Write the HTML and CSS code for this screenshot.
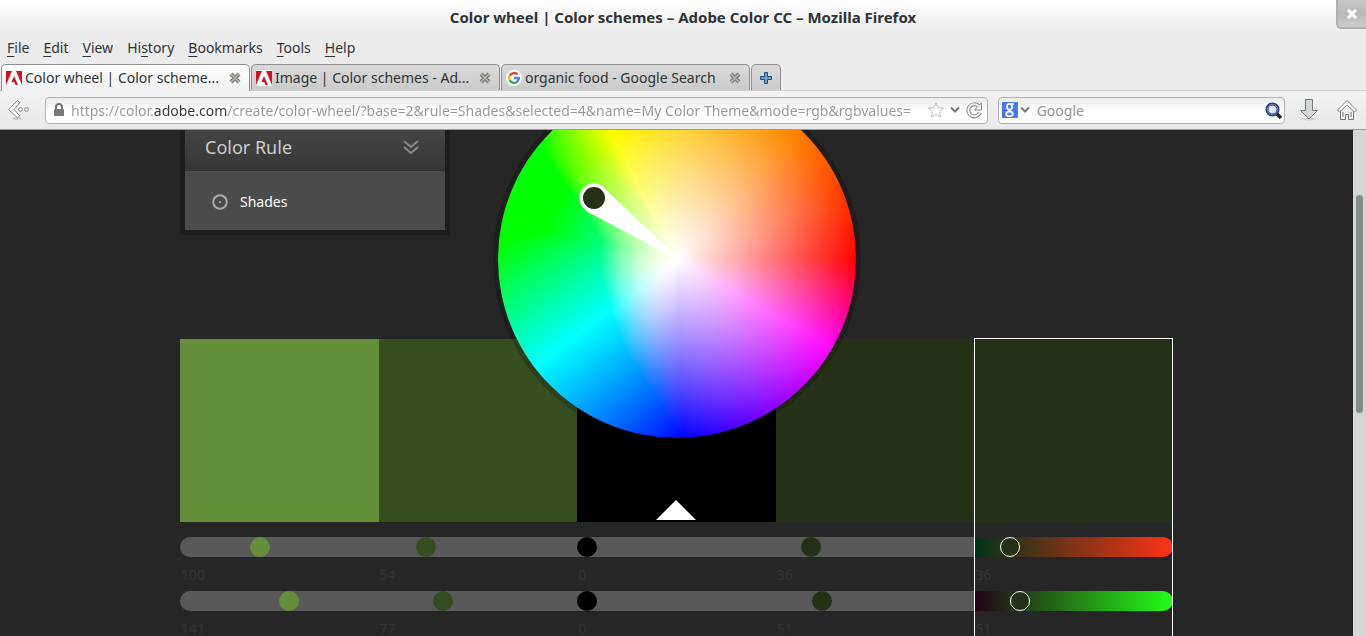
FILE: index.html
```
<!DOCTYPE html>
<html lang="en">
<head>
<meta charset="utf-8">
<title>Color wheel | Color schemes – Adobe Color CC</title>
<link rel="stylesheet" href="styles.css">
</head>
<body>
<header class="chrome">
  <div class="titlebar">
    <h1 class="title">Color wheel | Color schemes – Adobe Color CC – Mozilla Firefox</h1>
    <button class="window-close" aria-label="Close window"><svg width="10" height="10" viewBox="0 0 10 10"><path d="M1 1l8 8M9 1l-8 8" stroke="#fff" stroke-width="3"/></svg></button>
  </div>
  <nav class="menubar">
    <button><u>F</u>ile</button><button><u>E</u>dit</button><button><u>V</u>iew</button><button>Hi<u>s</u>tory</button><button><u>B</u>ookmarks</button><button><u>T</u>ools</button><button><u>H</u>elp</button>
  </nav>
  <div class="tabs">
    <div class="tab active">
      <svg class="fav" viewBox="0 0 16 16"><path fill="#fff" d="M0 0h16v16H0z"/><path fill="#d7101c" d="M0 1h6L0 15zM10 1h6v14zM8 6l4 9H9.500l-1.200-3H5.500z"/></svg>
      <button class="tab-label">Color wheel | Color scheme...</button>
      <button class="tab-close" aria-label="Close tab"><svg width="12" height="12" viewBox="0 0 12 12"><path d="M2 2l8 8M10 2l-8 8" stroke="#7c7c76" stroke-width="4"/><path d="M2 2l8 8M10 2l-8 8" stroke="#b9b9b3" stroke-width="1.500"/></svg></button>
    </div>
    <div class="tab">
      <svg class="fav" viewBox="0 0 16 16"><path fill="#fff" d="M0 0h16v16H0z"/><path fill="#d7101c" d="M0 1h6L0 15zM10 1h6v14zM8 6l4 9H9.500l-1.200-3H5.500z"/></svg>
      <button class="tab-label">Image | Color schemes - Ad...</button>
      <button class="tab-close" aria-label="Close tab"><svg width="12" height="12" viewBox="0 0 12 12"><path d="M2 2l8 8M10 2l-8 8" stroke="#7c7c76" stroke-width="4"/><path d="M2 2l8 8M10 2l-8 8" stroke="#b9b9b3" stroke-width="1.500"/></svg></button>
    </div>
    <div class="tab">
      <svg class="fav" viewBox="0 0 16 16"><circle cx="8" cy="8" r="8" fill="#fff"/><g fill="none" stroke-width="2.400"><path stroke="#ea4335" d="M3.700 5.800A4.800 4.800 0 0 1 11.500 4.500"/><path stroke="#fbbc05" d="M3.700 5.800a4.800 4.800 0 0 0 0 4.400"/><path stroke="#34a853" d="M3.700 10.200a4.800 4.800 0 0 0 7.600 1.400"/><path stroke="#4285f4" d="M8 8h4.800a4.800 4.800 0 0 1-1.500 3.600"/></g></svg>
      <button class="tab-label">organic food - Google Search</button>
      <button class="tab-close" aria-label="Close tab"><svg width="12" height="12" viewBox="0 0 12 12"><path d="M2 2l8 8M10 2l-8 8" stroke="#7c7c76" stroke-width="4"/><path d="M2 2l8 8M10 2l-8 8" stroke="#b9b9b3" stroke-width="1.500"/></svg></button>
    </div>
    <button class="tab new-tab" aria-label="New tab"><svg width="12" height="12" viewBox="0 0 12 12"><path d="M4.500.5h3v4h4v3h-4v4h-3v-4h-4v-3h4z" fill="#709bce" stroke="#204a87"/></svg></button>
  </div>
  <div class="toolbar">
    <button class="tool back" aria-label="Back"><svg width="24" height="22" viewBox="0 0 24 22"><ellipse cx="9" cy="19.500" rx="5" ry="1.300" fill="#ccc"/><path d="M9.500 1.500L.700 10.500l8.800 8.500 2.200-2.200-5.700-6.300 5.700-6.800z" fill="#f8f8f8" stroke="#888a85"/><g fill="#f4f4f4" stroke="#888a85"><circle cx="12.500" cy="10.500" r="1.900"/><circle cx="18.500" cy="10.500" r="1.900"/></g></svg></button>
    <div class="field address">
      <svg width="12" height="14" viewBox="0 0 12 14"><path d="M3 6V4a3 3 0 0 1 6 0v2" fill="none" stroke="#777" stroke-width="2"/><rect x="1" y="6" width="10" height="7" rx="1" fill="#777"/></svg>
      <input class="url" aria-label="Address" value="https://color.adobe.com/create/color-wheel/?base=2&amp;rule=Shades&amp;selected=4&amp;name=My Color Theme&amp;mode=rgb&amp;rgbvalues=">
      <button class="tool" aria-label="Bookmark"><svg width="16" height="16" viewBox="0 0 16 16"><path d="M8 1l2.200 4.600 5.200.6-3.800 3.600 1 5.200L8 12.400 3.400 15l1-5.200L.600 6.200l5.200-.6z" fill="#fff" stroke="#bbb"/></svg></button>
      <button class="tool" aria-label="History"><svg width="10" height="8" viewBox="0 0 10 8"><path d="M1 1.500l4 4 4-4" fill="none" stroke="#777" stroke-width="2"/></svg></button>
      <button class="tool" aria-label="Reload"><svg width="17" height="17" viewBox="0 0 17 17"><path d="M12.500 4A6 6 0 1 0 14 10.500" fill="none" stroke="#888" stroke-width="4"/><path d="M15.500 1v7H8.500l2.200-2.300z" fill="#f6f6f6" stroke="#888"/><path d="M12.500 4A6 6 0 1 0 14 10.200" fill="none" stroke="#f6f6f6" stroke-width="2"/></svg></button>
    </div>
    <div class="field search">
      <svg width="16" height="16" viewBox="0 0 16 16"><rect width="16" height="16" rx="1" fill="#4479f4"/><g fill="none" stroke="#fff" stroke-width="1.700"><ellipse cx="7.500" cy="4.800" rx="2.600" ry="2.900"/><path d="M8 7.500c-1.500 1 .200 1.500 1.500 2.300"/><ellipse cx="7.500" cy="12" rx="3.300" ry="2.300"/><path d="M8 2h4"/></g></svg>
      <button class="tool engine" aria-label="Search engine"><svg width="10" height="8" viewBox="0 0 10 8"><path d="M1 1.500l4 4 4-4" fill="none" stroke="#777" stroke-width="2"/></svg></button>
      <input class="query" aria-label="Search" placeholder="Google">
      <button class="tool" aria-label="Search"><svg width="17" height="17" viewBox="0 0 17 17"><path d="M11 11l5 5" stroke="#222" stroke-width="3.500"/><circle cx="7.500" cy="7.500" r="5.500" fill="#dce6f4" stroke="#263a82" stroke-width="3"/><circle cx="7.500" cy="7.500" r="5.200" fill="none" stroke="#6f86c8"/></svg></button>
    </div>
    <button class="tool download" aria-label="Downloads"><svg width="20" height="22" viewBox="0 0 20 22"><ellipse cx="10" cy="20" rx="7" ry="1.500" fill="#ccc"/><path d="M6.500.5h7v11h5L10 20l-8.500-8.500h5z" fill="#d2d7da" stroke="#73767a"/></svg></button>
    <button class="tool home" aria-label="Home"><svg width="22" height="22" viewBox="0 0 22 22"><path d="M4.500 12v8.500h5v-5h3v5h5V12L11 6z" fill="#eee" stroke="#73767a"/><path d="M7 13v5M15 13v5" stroke="#73767a"/><path d="M11 1.500L1.500 11l2 2L11 6l7.500 7 2-2z" fill="#fff" stroke="#888a85"/></svg></button>
  </div>
</header>
<div class="viewport">
  <main class="page">
    <section class="stage">
      <div class="rule-panel">
        <button class="rule-head">Color Rule<svg width="16" height="14" viewBox="0 0 16 14"><path d="M1 1l7 6 7-6M1 7l7 6 7-6" fill="none" stroke="#888" stroke-width="2"/></svg></button>
        <button class="rule-item"><svg width="16" height="16" viewBox="0 0 16 16"><circle cx="8" cy="8" r="6.800" fill="none" stroke="#aaa" stroke-width="2"/><circle cx="8" cy="8" r="1" fill="#bbb"/></svg>Shades</button>
      </div>
      <div class="wheel">
        <canvas id="wheel" width="358" height="358"></canvas>
        <svg class="marker" viewBox="0 0 358 358"><path d="M183 181L106 108 88 131z" fill="#fff"/><circle cx="96" cy="118" r="14.500" fill="#fff"/><circle cx="96" cy="118" r="11" fill="#253117"/></svg>
      </div>
    </section>
    <section class="theme">
      <div class="color c1"><button class="swatch" aria-label="Color 1"></button>
        <input type="range" max="255" value="100" id="r1"><label for="r1">100</label><input type="range" max="255" value="141" id="g1"><label for="g1">141</label></div>
      <div class="color c2"><button class="swatch" aria-label="Color 2"></button>
        <input type="range" max="255" value="54" id="r2"><label for="r2">54</label><input type="range" max="255" value="77" id="g2"><label for="g2">77</label></div>
      <div class="color c3"><button class="swatch" aria-label="Base color"><svg width="40" height="20" viewBox="0 0 40 20"><path d="M20 0l20 20H0z" fill="#fff"/></svg></button>
        <input type="range" max="255" value="0" id="r3"><label for="r3">0</label><input type="range" max="255" value="0" id="g3"><label for="g3">0</label></div>
      <div class="color c4"><button class="swatch" aria-label="Color 4"></button>
        <input type="range" max="255" value="36" id="r4"><label for="r4">36</label><input type="range" max="255" value="51" id="g4"><label for="g4">51</label></div>
      <div class="color c5 selected"><button class="swatch" aria-label="Color 5"></button>
        <input class="red" type="range" max="255" value="36" id="r5"><label for="r5">36</label><input class="green" type="range" max="255" value="51" id="g5"><label for="g5">51</label></div>
    </section>
  </main>
  <div class="scrollbar"><div class="thumb"></div></div>
</div>
<script src="wheel.js"></script>
</body>
</html>
```
FILE: styles.css
```
* { box-sizing: border-box; }
body { margin: 0; height: 100vh; display: flex; flex-direction: column; overflow: hidden; font: 14px/20px "Noto Sans", sans-serif; color: #2e3436; background: #262626; }
button { font: inherit; color: inherit; border: 0; background: none; padding: 0; text-align: left; }
svg { display: block; flex: none; }
.chrome { background: linear-gradient(#fff, #ececec 32px, #ececec); border-bottom: 1px solid #9c9c9c; flex: none; }
.titlebar { position: relative; height: 36px; }
.title { margin: 0; font-size: 15px; font-weight: 700; line-height: 34px; text-align: center; }
.window-close { position: absolute; right: 0; top: 0; width: 30px; height: 29px; display: grid; place-items: center; border: 2px solid #b0b0b0; border-width: 0 0 2px 2px; border-radius: 0 0 0 5px; background: linear-gradient(#c8c8c8, #b8b8b8 50%, #ccc); }
.menubar { display: flex; align-items: flex-start; gap: 14px; padding: 2px 7px; height: 28px; }
.menubar u { text-underline-offset: 3px; }
.tabs { display: flex; gap: 1px; padding-left: 1px; height: 27px; border-bottom: 1px solid #cfcfcf; }
.tab { width: 249px; display: flex; align-items: center; gap: 3px; padding: 0 8px 0 4px; border: 1px solid #8f8f8f; border-bottom: 0; border-radius: 5px 5px 0 0; background: linear-gradient(#d9d9d9, #cbcbcb); }
.tab.active { background: linear-gradient(#fff, #f0f0f0); margin-bottom: -1px; }
.fav { width: 16px; height: 16px; }
.tab-label { flex: 1; min-width: 0; white-space: nowrap; }
.new-tab { width: 30px; justify-content: center; padding: 0; }
.toolbar { display: flex; align-items: center; height: 38px; padding: 0 8px; background: linear-gradient(#f2f2f2, #e9e9e9); }
.tool { flex: none; }
.back { margin-right: 13px; }
.field { display: flex; align-items: center; height: 27px; border: 1px solid #b3b3b3; border-radius: 4px; background: linear-gradient(#ececec, #fff 14px); }
.address { flex: 945; gap: 6px; padding: 0 4px 0 7px; }
.search { flex: 285; margin-left: 10px; padding: 0 2px 0 3px; }
input { font: inherit; border: 0; min-width: 0; padding: 0; margin: 0; background: none; outline: 0; }
.url { flex: 1; padding-top: 1px; color: transparent; background: linear-gradient(90deg, #969896 83px, #2e3436 83px, #2e3436 157px, #969896 157px); background-clip: text; -webkit-background-clip: text; }
.engine { margin: 0 7px 0 2px; }
.query { flex: 1; padding-top: 1px; }
.query::placeholder { color: #969896; opacity: 1; }
.download { margin-left: 14px; }
.home { margin-left: 17px; }
.viewport { flex: 1; min-height: 0; display: flex; overflow: hidden; }
.page { flex: 1; min-width: 0; overflow: hidden; padding: 0 180px; }
.stage { position: relative; height: 209px; }
.rule-panel { width: 270px; height: 105px; display: flex; flex-direction: column; border: 5px solid #1d1d1d; border-top: 0; background: #4b4b4b; }
.rule-head { height: 41px; display: flex; align-items: center; justify-content: space-between; padding: 0 26px 6px 20px; font-size: 18px; color: #ccc; background: linear-gradient(#454545, #363636); border-bottom: 1px solid #303030; }
.rule-item { flex: 1; display: flex; align-items: center; gap: 12px; padding-left: 27px; padding-top: 3px; color: #fff; }
.wheel { position: absolute; z-index: 1; top: -50px; left: 50%; width: 358px; height: 358px; margin-left: -179px; border-radius: 50%; box-shadow: 0 0 0 5px rgba(0, 0, 0, .2); }
.wheel canvas { display: block; border-radius: 50%; }
.marker { position: absolute; inset: 0; }
.theme { display: grid; grid-template-columns: repeat(5, 1fr); }
.color { display: flex; flex-direction: column; position: relative; }
.c1 { --c: #658e3b; } .c2 { --c: #364d20; } .c3 { --c: #000; } .c4, .c5 { --c: #253117; }
.swatch { height: 183px; background: var(--c); margin-bottom: 15px; display: flex; justify-content: center; align-items: end; padding-bottom: 2px; }
.color input { appearance: none; width: 100%; height: 20px; background: #595959; }
.c1 input { border-radius: 10px 0 0 10px; }
.c5 input { border-radius: 0 10px 10px 0; }
.c5 .red { background: linear-gradient(90deg, #003317, #ff3317); }
.c5 .green { background: linear-gradient(90deg, #240017, #24ff17); }
.color input::-webkit-slider-thumb { appearance: none; width: 20px; height: 20px; border-radius: 50%; background: var(--c); }
.selected input::-webkit-slider-thumb { border: 1px solid #fff; }
.color label { height: 34px; padding: 8px 1px; color: #303537; }
.selected::after { content: ""; position: absolute; inset: -1px 0; border: 1px solid #fff; pointer-events: none; }
.scrollbar { width: 13px; background: #d6d6d6; padding: 65px 3px 0; }
.thumb { height: 218px; border-radius: 4px; background: #858a8a; }
```
FILE: wheel.js
```
const canvas = document.getElementById('wheel');
const ctx = canvas.getContext('2d');
const size = canvas.width;
const image = ctx.createImageData(size, size);

// Stops: [angle in degrees, value at the rim, radius where the rim value is reached, falloff exponent]
const channels = [
  [[0, 1, 1, 1], [118, 1, 1, 1], [140, 0, 1, 1.5], [144, 0, .83, 1.5], [149, 0, .66, 1.5], [156, 0, .53, 1.8], [166, 0, .44, 2], [181, 0, .43, 2.2], [199, 0, .44, 2.2], [215, 0, .46, 2.2], [231, 0, .52, 2.2], [251, 0, .66, 1.9], [263, 0, .8, 1.5], [272, 0, 1, 1.2], [330, 1, 1, 1], [360, 1, 1, 1]],
  [[0, 0, 1, 1], [48, .5, 1, 1], [90, .78, 1, 1], [120, 1, 1, 1], [217, 1, 1, 1], [272, 0, 1, 1], [330, 0, 1, 1], [360, 0, 1, 1]],
  [[0, 0, 1, 1], [45, 0, .95, 1.1], [90, 0, .9, 1.1], [120, 0, .75, 1.1], [150, 0, .74, 1.1], [168, 0, .76, 1.1], [176, 0, 1, 1], [217, 1, 1, 1], [330, 1, 1, 1], [360, 0, 1, 1]]
];

function level(stops, angle, radius) {
  let i = 1;
  while (stops[i][0] < angle) i++;
  const a = stops[i - 1], b = stops[i];
  const t = (angle - a[0]) / (b[0] - a[0]);
  const [rim, reach, power] = [1, 2, 3].map(k => a[k] + (b[k] - a[k]) * t);
  return 255 * (1 - (1 - rim) * Math.min(1, Math.pow(radius / reach, power)));
}

for (let y = 0; y < size; y++) {
  for (let x = 0; x < size; x++) {
    const dx = x - size / 2, dy = size / 2 - y;
    const angle = (Math.atan2(dy, dx) * 180 / Math.PI + 360) % 360;
    const radius = Math.hypot(dx, dy) / (size / 2);
    const p = (y * size + x) * 4;
    channels.forEach((stops, c) => { image.data[p + c] = level(stops, angle, radius); });
    image.data[p + 3] = 255;
  }
}
ctx.putImageData(image, 0, 0);
```
